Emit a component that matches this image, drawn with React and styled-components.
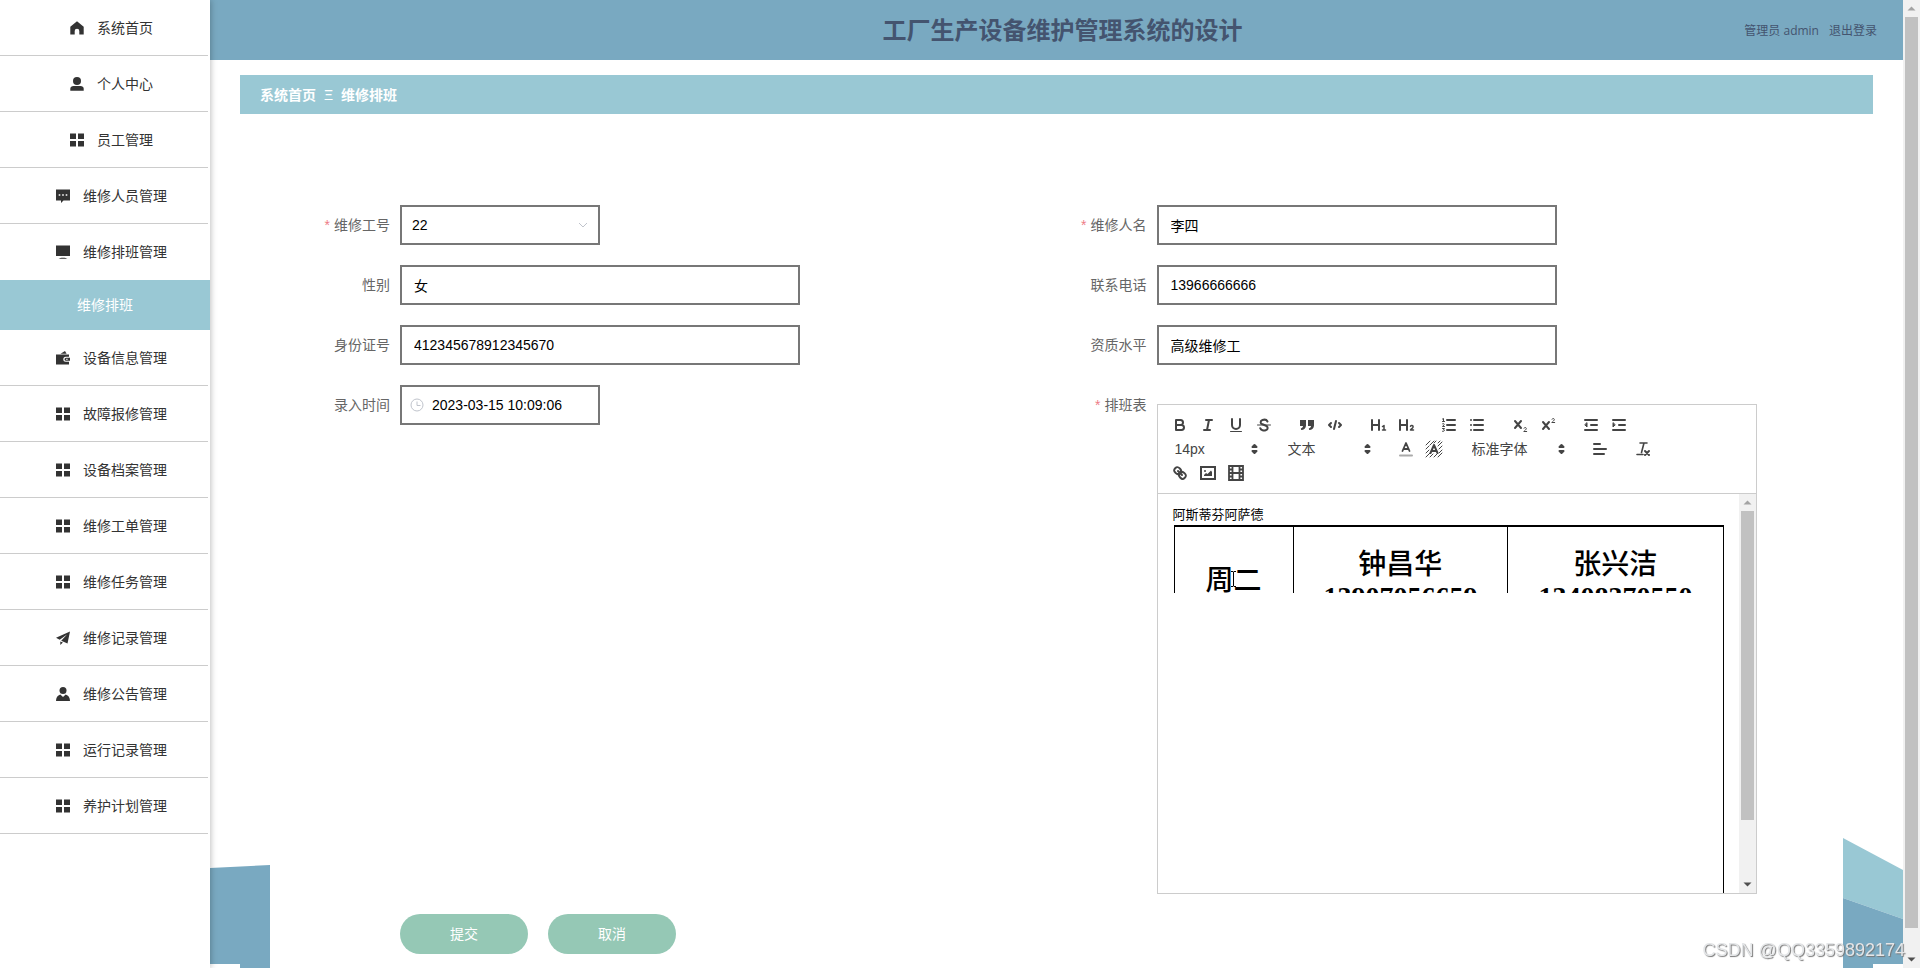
import React from "react";
import styled, { createGlobalStyle } from "styled-components";

const cjk = `"Noto Sans CJK SC", sans-serif`;
const steel = "#79a9c1";
const aqua = "#99c8d4";

const GlobalStyle = createGlobalStyle`
  * { box-sizing: border-box; }
  body { margin: 0; background: #fff; color: #333; font: 14px/20px "Open Sans", ${cjk}; }
  a { color: inherit; text-decoration: none; }
  svg { display: block; flex: none; }
`;

const Page = styled.div`
  display: flex;
  min-height: 100vh;
`;

/* Sidebar */
const Sidebar = styled.nav`
  flex: none;
  width: 210px;
  z-index: 1;
  background: #fff;
  box-shadow: 1px 0 6px rgba(0, 0, 0, 0.25);
`;
const Menu = styled.ul`
  margin: 0;
  padding: 0;
  list-style: none;
`;
const MenuLink = styled.a`
  display: flex;
  align-items: center;
  justify-content: center;
  gap: 13px;
  height: 56px;
  margin-right: 2px;
  padding-left: 15px;
  border-bottom: 1px solid ${(p) => (p.$open ? "transparent" : "#ccc")};
`;
const SubLink = styled.a`
  display: flex;
  align-items: center;
  justify-content: center;
  height: 50px;
  background: ${aqua};
  color: #fff;
`;

/* Main column */
const Main = styled.main`
  display: flex;
  flex: 1;
  flex-direction: column;
  min-width: 0;
`;
const Header = styled.header`
  display: grid;
  grid-template-columns: 1fr auto 1fr;
  align-items: center;
  height: 60px;
  padding: 0 26px 0 38px;
  background: ${steel};
  color: #44546f;
`;
const Title = styled.h1`
  grid-column: 2;
  margin: 0;
  font-size: 24px;
  line-height: 36px;
`;
const UserBar = styled.div`
  display: flex;
  justify-content: flex-end;
  gap: 10px;
  padding-top: 2px;
  font-size: 12px;
`;
const Breadcrumb = styled.nav`
  display: flex;
  align-items: center;
  gap: 8px;
  height: 39px;
  margin: 15px 30px 0;
  padding: 0 20px;
  background: ${aqua};
  color: #fff;
  font-weight: 700;
`;
const Separator = styled.span`
  font: 14px/20px "Liberation Sans", sans-serif;
`;
const Body = styled.div`
  display: flex;
  flex: 1;
`;
const Gutter = styled.div`
  display: flex;
  flex: none;
  align-items: flex-end;
  width: 60px;
`;

/* Form */
const Form = styled.form`
  display: grid;
  flex: 1;
  grid-template-columns: 1fr 1fr;
  align-content: start;
  gap: 20px 0;
  min-width: 0;
  padding: 91px 30px 14px;
`;
const Field = styled.div`
  display: flex;
  align-items: flex-start;
`;
const Label = styled.label`
  flex: none;
  width: 100px;
  padding-right: 10px;
  color: #666;
  line-height: 40px;
  text-align: right;
`;
const Star = styled.span`
  margin-right: 4px;
  color: #ee7c86;
  font-family: "Liberation Sans", sans-serif;
`;
const control = `
  width: 100%;
  height: 40px;
  border: 2px solid #777;
  border-radius: 0;
  background: #fff;
  color: #000;
  font: 14px "Liberation Sans", ${cjk};
  outline: none;
`;
const Input = styled.input`
  ${control}
  padding: 0 12px 0 ${(p) => (p.$icon ? 30 : 12)}px;
`;
const Select = styled.select`
  ${control}
  appearance: none;
  padding: 0 30px 0 10px;
`;
const Control = styled.div`
  display: grid;
  width: ${(p) => (p.$short ? 200 : 400)}px;
  align-items: center;

  > * { grid-area: 1 / 1; }
  > svg { pointer-events: none; justify-self: ${(p) => p.$side || "start"}; margin: 0 10px; z-index: 1; }
`;
const Actions = styled.div`
  display: flex;
  grid-column: 1 / -1;
  gap: 20px;
  padding-left: 100px;
`;
const Button = styled.button`
  width: 128px;
  height: 40px;
  padding: 0 0 2px;
  border: 0;
  border-radius: 20px;
  background: #95c8b5;
  color: #fff;
  font: 14px ${cjk};
`;

/* Rich text editor */
const Editor = styled.div`
  width: 600px;
  margin-top: 19px;
  border: 1px solid #ccc;
`;
const Toolbar = styled.div`
  display: flex;
  flex-wrap: wrap;
  padding: 8px;
  border-bottom: 1px solid #ccc;
  color: #444;
`;
const Group = styled.div`
  display: flex;
  margin-right: 15px;
`;
const Tool = styled.button`
  width: 28px;
  height: 24px;
  padding: 3px 5px;
  border: 0;
  background: none;
  color: inherit;
`;
const Picker = styled.div`
  display: grid;
  align-items: center;
  width: ${(p) => p.$width}px;
  height: 24px;

  > * { grid-area: 1 / 1; }
  > svg { justify-self: end; pointer-events: none; }
`;
const PickerSelect = styled.select`
  appearance: none;
  width: 100%;
  height: 24px;
  padding: 0 9px;
  border: 0;
  background: none;
  color: #444;
  font: 14px "Liberation Sans", ${cjk};
`;
const EditorBody = styled.div`
  display: flex;
  height: 399px;
`;
const Content = styled.div`
  display: flex;
  flex: 1;
  flex-direction: column;
  min-width: 0;
  padding: 11px 15px 0;
  color: #000;
  font-size: 13px;
  line-height: 18px;
  outline: none;
`;
const Paragraph = styled.p`
  margin: 0;
`;
const Sheet = styled.div`
  flex: 1;
  margin: 2px 0 0 1px;
  border-right: 1px solid #000;
`;
const SheetClip = styled.div`
  position: relative;
  height: 68px;
  overflow: hidden;
  border-top: 2px solid #000;
`;
const Roster = styled.table`
  width: 100%;
  border-collapse: collapse;
  table-layout: fixed;
  font: 500 28px/32px "Liberation Serif", ${cjk};

  td {
    height: 108px;
    padding: 0;
    border-left: 1px solid #000;
    text-align: center;
  }
  td:first-child { width: 119px; }
`;
const Phone = styled.span`
  font-weight: 700;
`;
const Pointer = styled.svg`
  position: absolute;
  left: 56px;
  top: 44px;
`;

/* Scroll bars */
const Rail = styled.div`
  display: flex;
  flex: none;
  flex-direction: column;
  width: 17px;
  height: ${(p) => (p.$page ? "100vh" : "100%")};
  background: #f1f1f1;
`;
const Thumb = styled.div`
  flex: ${(p) => p.$grow};
  margin: 0 2px;
  background: #c1c1c1;
`;
const Spare = styled.div`
  flex: ${(p) => p.$grow};
`;
const Watermark = styled.div`
  position: fixed;
  right: 15px;
  bottom: 6px;
  z-index: 2;
  color: #e4e6e8;
  font: 18px/24px "Liberation Sans", sans-serif;
  text-shadow: 1px 1px 1px #777;
`;

const Arrow = ({ down }) => (
  <svg width="17" height="17" viewBox="0 0 17 17">
    <path d={down ? "M4.500 6.500h8l-4 4z" : "M4.500 10.500h8l-4-4z"} fill={down ? "#505050" : "#a3a3a3"} />
  </svg>
);

const ScrollBar = ({ page, thumb, spare }) => (
  <Rail $page={page} aria-hidden="true">
    <Arrow />
    <Thumb $grow={thumb} />
    <Spare $grow={spare} />
    <Arrow down />
  </Rail>
);

const menuShapes = {
  home: <path d="M7 0.300 13.700 5.800V13.500H9.300V10a2.300 2.300 0 0 0-4.600 0v3.500H0.300V5.800z" />,
  user: (
    <>
      <circle cx="7" cy="4" r="4" />
      <path d="M0.300 13.800v-2C0.300 10 1.700 9 3.500 9h7c1.800 0 3.200 1 3.200 2.800v2z" />
    </>
  ),
  grid: <path d="M0 0.500h6v5.500H0zM8 0.500h6v5.500H8zM0 8h6v5.500H0zM8 8h6v5.500H8z" />,
  chat: <path fillRule="evenodd" d="M0 0.500h14v11H7.500L5 14v-2.500H0zM2.700 5.300v1.500h1.600V5.300zM6.200 5.300v1.500h1.600V5.300zM9.700 5.300v1.500h1.600V5.300z" />,
  monitor: <path d="M0 0.500h14v10.500H0zM2.500 13.800C4 12.300 10 12.300 11.500 13.800z" />,
  wallet: (
    <>
      <path d="M4.500 2.800 9 0l1.600 2.800z" />
      <path fillRule="evenodd" d="M0 3.500h13v2.300H9.800a2.500 2.500 0 0 0 0 5H13V13.500H0zM10 6.800h4v3h-4a1.500 1.500 0 0 1 0-3zM10.300 7.700v1.200h1.200V7.700z" />
    </>
  ),
  send: <path d="M14 0.500 0 6.700l3.700 2L11 3.500 5.200 9.700 11.500 12.500zM4.300 10.500V14l2.600-2.400z" />,
  person: (
    <>
      <circle cx="7" cy="3.600" r="3.500" />
      <path d="M0 14c0-3.500 1.500-5.500 4.300-6.500L7 10l2.700-2.500C12.500 8.500 14 10.500 14 14z" />
    </>
  ),
};

const MenuIcon = ({ name }) => (
  <svg width="14" height="14" viewBox="0 0 14 14" fill="#333">{menuShapes[name]}</svg>
);

const menuItems = [
  ["home", "系统首页"],
  ["user", "个人中心"],
  ["grid", "员工管理"],
  ["chat", "维修人员管理"],
  ["monitor", "维修排班管理", "维修排班"],
  ["wallet", "设备信息管理"],
  ["grid", "故障报修管理"],
  ["grid", "设备档案管理"],
  ["grid", "维修工单管理"],
  ["grid", "维修任务管理"],
  ["send", "维修记录管理"],
  ["person", "维修公告管理"],
  ["grid", "运行记录管理"],
  ["grid", "养护计划管理"],
];

const ToolSvg = styled.svg`
  fill: none;
  stroke: currentColor;
  stroke-width: 2;
  stroke-linecap: round;
  stroke-linejoin: round;

  .fill { fill: currentColor; stroke: none; }
  .solid { fill: currentColor; }
  .thin { stroke-width: 1; }
`;

const toolShapes = {
  加粗: <path d="M5 4h4.500a2.500 2.500 0 0 1 0 5H5zM5 9h5.500a2.500 2.500 0 0 1 0 5H5z" />,
  斜体: <path d="M7 4h6M5 14h6M8 14l2-10" />,
  下划线: (
    <>
      <path d="M5 3v6a4 4 0 0 0 8 0V3" />
      <rect className="fill" x="3" y="15" width="12" height="1" rx="0.500" />
    </>
  ),
  删除线: (
    <>
      <path className="thin" d="M2.500 9h13" />
      <path d="M12.500 5.500C11.500 3.500 9 3.500 7.500 4 5 4.800 5 7.500 7.500 8.300l3 1.200c3 1 2.800 4 .2 4.700-1.800.5-4.700.3-5.500-2" />
    </>
  ),
  引用: (
    <>
      <path className="fill" d="M2 4h6v5.500C8 12 6 14 3.200 14l-.4-1.600C4.200 12 5 11.200 5 10H2z" />
      <path className="fill" d="M10 4h6v5.500c0 2.500-2 4.500-4.800 4.500l-.4-1.600C12.200 12 13 11.200 13 10h-3z" />
    </>
  ),
  代码: <path d="M5 7 3 9l2 2M13 7l2 2-2 2M10 5 8 13" />,
  一级标题: (
    <>
      <path d="M3 4v10M10 4v10M10 9H3" />
      <path d="M13.500 10.500 15 9.500V14M13.500 14h3" strokeWidth="1.500" />
    </>
  ),
  二级标题: (
    <>
      <path d="M3 4v10M10 4v10M10 9H3" />
      <path d="M13.500 10.300c.6-1.300 2.800-.9 2.600.7-.1 1-1.600 1.700-2.600 3h3" strokeWidth="1.500" />
    </>
  ),
  有序列表: (
    <>
      <path d="M7 4h8M7 9h8M7 14h8" />
      <path className="thin" d="M2.500 3 3.500 2.500v3M2.500 5.500h2M2.500 7.800c1-.8 2 0 1.500 1l-1.500 1.700h2M2.500 12.500h2l-1 1.300c1.500 0 1.200 2-1 1.500" />
    </>
  ),
  无序列表: <path d="M6 4h9M6 9h9M6 14h9M3 4h0M3 9h0M3 14h0" />,
  下标: (
    <>
      <path d="M4 5l6 7M10 5l-6 7" />
      <path className="thin" d="M13 12.200c.5-1.200 2.500-.9 2.300.5-.1.900-1.600 1.600-2.500 2.800h2.900" />
    </>
  ),
  上标: (
    <>
      <path d="M4 6l6 7M10 6l-6 7" />
      <path className="thin" d="M13 3.200c.5-1.200 2.500-.9 2.300.5-.1.900-1.600 1.600-2.500 2.800h2.900" />
    </>
  ),
  减少缩进: (
    <>
      <path d="M3 14h12M3 4h12M9 9h6" />
      <path className="solid" strokeWidth="1" d="M5 7v4L3 9z" />
    </>
  ),
  增加缩进: (
    <>
      <path d="M3 14h12M3 4h12M9 9h6" />
      <path className="solid" strokeWidth="1" d="M3 7v4l2-2z" />
    </>
  ),
  文字颜色: (
    <>
      <path d="M3 15.500h12" stroke="#aaa" />
      <path strokeWidth="1.800" d="M5.500 11 9 3l3.500 8M6.800 9h4.400" />
    </>
  ),
  背景颜色: (
    <>
      <path className="thin" d="M1 5l4-4M1 9l3-3M1 13l3-3M1 17l4-4M5 5 9 1M9 3l2-2M13 3l2-2M13 6l4-4M14 9l3-3M14 13l3-3M13 17l4-4M9 17l3-3M5 17l3-3" />
      <path strokeWidth="2" d="M5.500 13 9 5l3.500 8M6.800 11h4.400" />
    </>
  ),
  对齐: <path d="M3 9h12M3 14h10M3 4h6" />,
  清除格式: (
    <>
      <path d="M6 3h7M3 14.500h6M7.500 12.500 10 3" strokeWidth="1.600" />
      <path d="m11 11 4 4M15 11l-4 4" />
    </>
  ),
  链接: (
    <>
      <path d="M7 7l4 4" />
      <path d="M8.900 4.577a3.476 3.476 0 0 1 .36 4.679A3.476 3.476 0 0 1 4.577 8.900C3.185 7.500 2.035 6.400 4.217 4.217S7.500 3.185 8.900 4.577Z" />
      <path d="M13.423 9.100a3.476 3.476 0 0 0-4.679-.36 3.476 3.476 0 0 0 .36 4.679c1.392 1.392 2.500 2.542 4.679.36S14.815 10.500 13.423 9.100Z" />
    </>
  ),
  图片: (
    <>
      <rect x="2" y="3" width="14" height="12" strokeLinejoin="miter" />
      <circle className="fill" cx="6" cy="7" r="1" />
      <path className="fill" d="M5 12v-1l2-2 1.500 1L12 6.500l1 1.500v4z" />
    </>
  ),
  视频: (
    <path strokeWidth="1.800" strokeLinejoin="miter" d="M2 2h14v14H2zM5.500 2v14M12.500 2v14M5.500 9h7M2 5.500h3M2 9h3M2 12.500h3M13 5.500h3M13 9h3M13 12.500h3" />
  ),
};

const ToolGroup = ({ names }) => (
  <Group>
    {names.map((name) => (
      <Tool key={name} type="button" aria-label={name}>
        <ToolSvg width="18" height="18" viewBox="0 0 18 18">{toolShapes[name]}</ToolSvg>
      </Tool>
    ))}
  </Group>
);

const ToolPicker = ({ label, value, width }) => (
  <Group>
    <Picker $width={width}>
      <PickerSelect aria-label={label} defaultValue={value}>
        <option>{value}</option>
      </PickerSelect>
      <svg width="18" height="18" viewBox="0 0 18 18" fill="#444" stroke="#444" strokeWidth="2" strokeLinejoin="round">
        <path d="M6.500 11h4l-2 2zM6.500 7h4l-2-2z" />
      </svg>
    </Picker>
  </Group>
);

const FormField = ({ id, label, required, children }) => (
  <Field>
    <Label htmlFor={id}>
      {required && <Star>*</Star>}
      {label}
    </Label>
    {children}
  </Field>
);

const TextField = ({ id, label, value, required }) => (
  <FormField id={id} label={label} required={required}>
    <Control>
      <Input id={id} type="text" defaultValue={value} />
    </Control>
  </FormField>
);

const ScheduleEditor = ({ id }) => (
  <Editor>
    <Toolbar>
      <ToolGroup names={["加粗", "斜体", "下划线", "删除线"]} />
      <ToolGroup names={["引用", "代码"]} />
      <ToolGroup names={["一级标题", "二级标题"]} />
      <ToolGroup names={["有序列表", "无序列表"]} />
      <ToolGroup names={["下标", "上标"]} />
      <ToolGroup names={["减少缩进", "增加缩进"]} />
      <ToolPicker label="字号" value="14px" width={98} />
      <ToolPicker label="段落" value="文本" width={98} />
      <ToolGroup names={["文字颜色", "背景颜色"]} />
      <ToolPicker label="字体" value="标准字体" width={108} />
      <ToolGroup names={["对齐"]} />
      <ToolGroup names={["清除格式"]} />
      <ToolGroup names={["链接", "图片", "视频"]} />
    </Toolbar>
    <EditorBody>
      <Content id={id} role="textbox" aria-multiline="true" aria-label="排班表" contentEditable suppressContentEditableWarning spellCheck={false}>
        <Paragraph>阿斯蒂芬阿萨德</Paragraph>
        <Sheet>
          <SheetClip>
            <Roster>
              <tbody>
                <tr>
                  <td>周二</td>
                  <td>钟昌华<br /><Phone>13907056659</Phone></td>
                  <td>张兴洁<br /><Phone>13408370550</Phone></td>
                </tr>
              </tbody>
            </Roster>
            <Pointer width="7" height="16" viewBox="0 0 7 16" fill="none" stroke="#000">
              <path d="M1 0.500h2l.5 1 .5-1h2M3.500 1v14M1 15.500h2l.5-1 .5 1h2" />
            </Pointer>
          </SheetClip>
        </Sheet>
      </Content>
      <ScrollBar thumb={309} spare={56} />
    </EditorBody>
  </Editor>
);

export default function App() {
  return (
    <Page>
      <GlobalStyle />
      <Sidebar>
        <Menu>
          {menuItems.map(([icon, text, child]) => (
            <li key={text}>
              <MenuLink href="#" $open={Boolean(child)}>
                <MenuIcon name={icon} />
                {text}
              </MenuLink>
              {child && <SubLink href="#">{child}</SubLink>}
            </li>
          ))}
        </Menu>
      </Sidebar>
      <Main>
        <Header>
          <Title>工厂生产设备维护管理系统的设计</Title>
          <UserBar>
            <span>管理员 admin</span>
            <a href="#">退出登录</a>
          </UserBar>
        </Header>
        <Breadcrumb aria-label="breadcrumb">
          <a href="#">系统首页</a>
          <Separator>Ξ</Separator>
          <span>维修排班</span>
        </Breadcrumb>
        <Body>
          <Gutter>
            <svg width="60" height="103" viewBox="0 0 60 103">
              <path d="M0 3 60 0v103H30v-4H0z" fill={steel} />
            </svg>
          </Gutter>
          <Form onSubmit={(e) => e.preventDefault()}>
            <FormField id="workNo" label="维修工号" required>
              <Control $short $side="end">
                <Select id="workNo" defaultValue="22">
                  <option>22</option>
                </Select>
                <svg width="14" height="14" viewBox="0 0 14 14" fill="none" stroke="#c0c4cc">
                  <path d="m3 5 4 4 4-4" />
                </svg>
              </Control>
            </FormField>
            <TextField id="name" label="维修人名" value="李四" required />
            <TextField id="gender" label="性别" value="女" />
            <TextField id="phone" label="联系电话" value="13966666666" />
            <TextField id="idCard" label="身份证号" value="412345678912345670" />
            <TextField id="level" label="资质水平" value="高级维修工" />
            <FormField id="time" label="录入时间">
              <Control $short>
                <Input id="time" type="text" defaultValue="2023-03-15 10:09:06" $icon />
                <svg width="14" height="14" viewBox="0 0 14 14" fill="none" stroke="#c0c4cc">
                  <circle cx="7" cy="7" r="6" />
                  <path d="M7 3.500V7.500h3.500" />
                </svg>
              </Control>
            </FormField>
            <FormField id="schedule" label="排班表" required>
              <ScheduleEditor id="schedule" />
            </FormField>
            <Actions>
              <Button type="submit">提交</Button>
              <Button type="button">取消</Button>
            </Actions>
          </Form>
          <Gutter>
            <svg width="60" height="130" viewBox="0 0 60 130">
              <path d="M0 0 60 32v49L0 60z" fill={aqua} />
              <path d="M0 60 60 81v45H30v4H0z" fill={steel} />
            </svg>
          </Gutter>
        </Body>
      </Main>
      <ScrollBar page thumb={911} spare={23} />
      <Watermark>CSDN @QQ3359892174</Watermark>
    </Page>
  );
}
